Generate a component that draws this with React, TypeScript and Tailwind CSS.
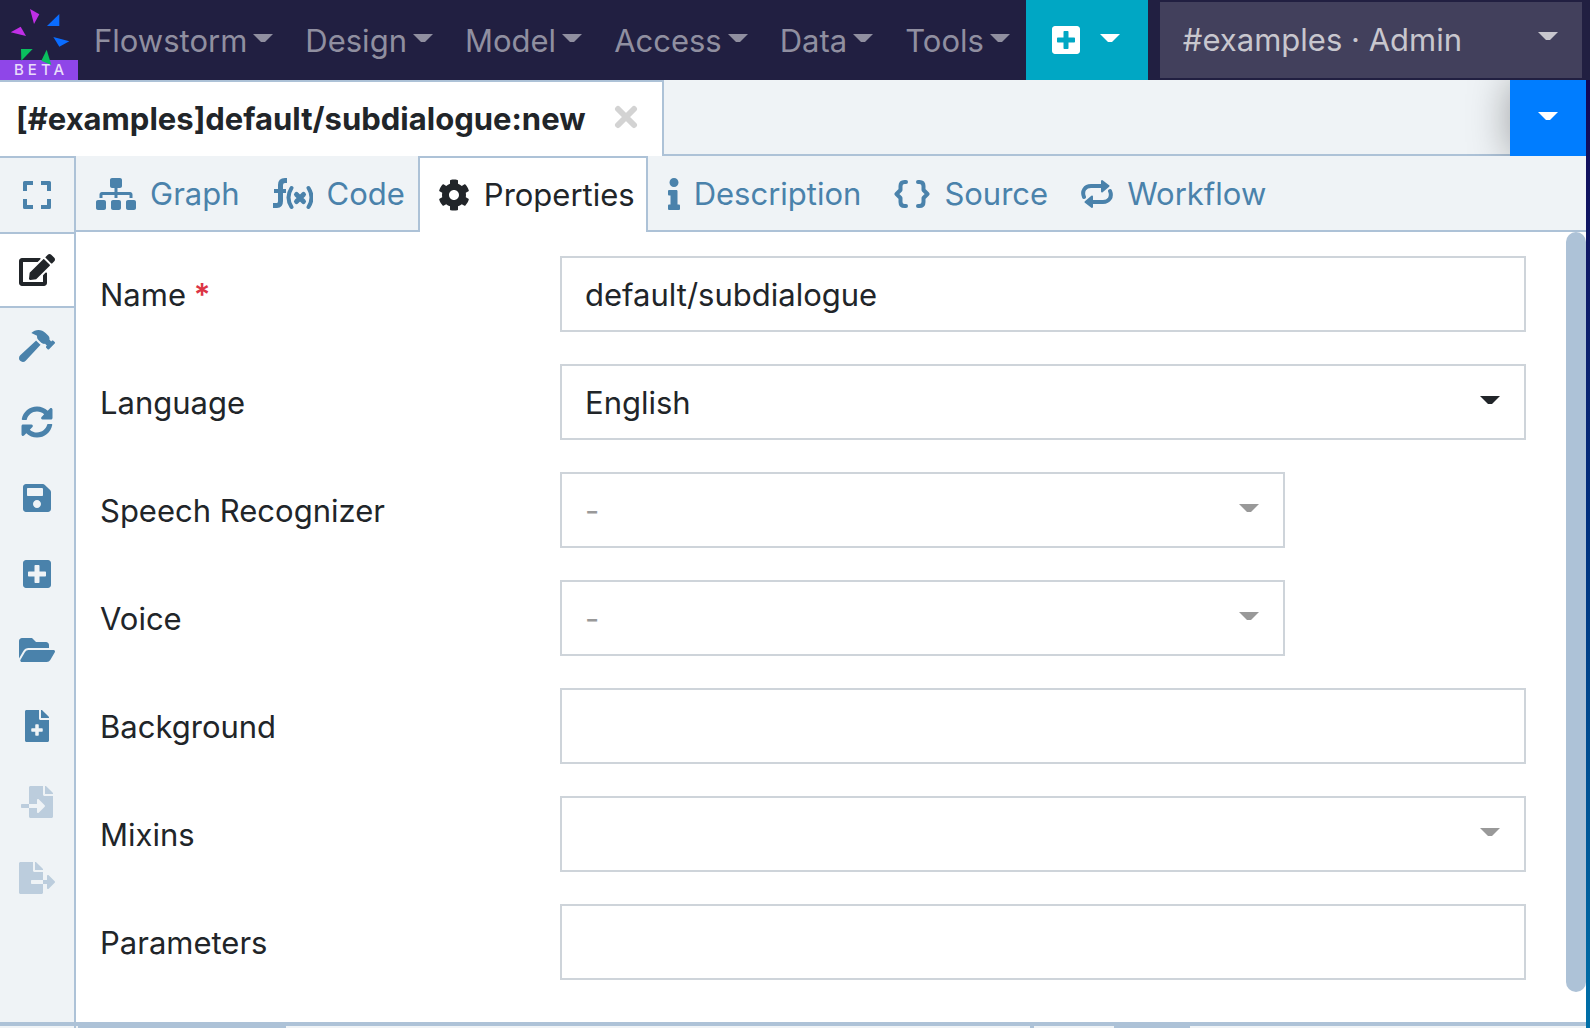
import { useState } from "react";
import type { ReactNode } from "react";
import {
  FaCog,
  FaEdit,
  FaFileExport,
  FaFileImport,
  FaFolderOpen,
  FaHammer,
  FaInfo,
  FaPlusSquare,
  FaSave,
  FaSitemap,
  FaSyncAlt,
} from "react-icons/fa";

function Caret({ className = "" }: { className?: string }) {
  return (
    <svg viewBox="0 0 20 8" fill="currentColor" aria-hidden="true" className={`h-2 w-5 shrink-0 ${className}`}>
      <path d="M0 0H20L12 8H8Z" />
    </svg>
  );
}

function LogoMark() {
  return (
    <svg viewBox="0 0 234 240" aria-hidden="true" className="absolute inset-0 h-full w-full">
      <g fill="#c02fe6">
        <path d="M90 27L118 43L102 72Z" />
        <path d="M32 97L62 80L78 108Z" />
      </g>
      <g fill="#0a6cff">
        <path d="M178 42V78H141Z" />
        <path d="M160 111L208 124L178 140Z" />
      </g>
      <g fill="#0abf5e">
        <path d="M63 147H98L64 182Z" />
        <path d="M140 149L124 182L154 195Z" />
      </g>
    </svg>
  );
}

function ExpandIcon() {
  return (
    <svg viewBox="0 0 28 28" fill="currentColor" aria-hidden="true" className="h-7 w-7">
      <path d="M0 1.500A1.500 1.500 0 0 1 1.500 0H10V4H4V10H0Z" />
      <path d="M18 0H26.500A1.500 1.500 0 0 1 28 1.500V10H24V4H18Z" />
      <path d="M0 18H4V24H10V28H1.500A1.500 1.500 0 0 1 0 26.500Z" />
      <path d="M24 18H28V26.500A1.500 1.500 0 0 1 26.500 28H18V24H24Z" />
    </svg>
  );
}

function FilePlusIcon() {
  return (
    <svg viewBox="0 0 384 512" fill="currentColor" aria-hidden="true" className="h-8 w-6">
      <path
        fillRule="evenodd"
        d="M224 136V0H24C10.700 0 0 10.700 0 24V488C0 501.300 10.700 512 24 512H360C373.300 512 384 501.300 384 488V160H248C234.800 160 224 149.200 224 136ZM164 240Q164 228 176 228H208Q220 228 220 240V292H272Q284 292 284 304V336Q284 348 272 348H220V400Q220 412 208 412H176Q164 412 164 400V348H112Q100 348 100 336V304Q100 292 112 292H164Z"
      />
      <path d="M384 121.900V128H256V0H262.100C268.500 0 274.600 2.500 279.100 7L377 105C381.500 109.500 384 115.600 384 121.900Z" />
    </svg>
  );
}

function FunctionIcon() {
  return (
    <svg viewBox="0 0 40 32" fill="none" stroke="currentColor" aria-hidden="true" className="h-8 w-10">
      <path
        strokeWidth="5"
        strokeLinejoin="round"
        d="M14 2.500H12C9 2.500 7.500 4 7.500 7V23C7.500 25.500 6.500 27.500 4 27.500H0"
      />
      <path strokeWidth="4" d="M1 13H13" />
      <path strokeWidth="4" strokeLinecap="round" d="M18.500 10Q12.500 19.500 18.500 29M35.500 10Q41.500 19.500 35.500 29" />
      <path strokeWidth="5" strokeLinecap="round" d="M23.500 16.500L30.500 23.500M30.500 16.500L23.500 23.500" />
    </svg>
  );
}

function BracesIcon() {
  return (
    <svg viewBox="0 0 36 28" fill="none" stroke="currentColor" strokeWidth="4" strokeLinecap="round" strokeLinejoin="round" aria-hidden="true" className="h-7 w-9">
      <path d="M12 2H10.500Q6.500 2 6.500 6V10L2.500 14L6.500 18V22Q6.500 26 10.500 26H12" />
      <path d="M24 2H25.500Q29.500 2 29.500 6V10L33.500 14L29.500 18V22Q29.500 26 25.500 26H24" />
    </svg>
  );
}

function RepeatIcon() {
  return (
    <svg viewBox="0 0 32 32" fill="none" stroke="currentColor" strokeLinecap="round" aria-hidden="true" className="h-8 w-8">
      <path strokeWidth="4" d="M3 19C0.500 13 4 8 10 8H21M29 13C31.500 19 28 24 22 24H11" />
      <path fill="currentColor" strokeWidth="2" strokeLinejoin="round" d="M21 3V13.500L27.500 8ZM11 29V18.500L4.500 24Z" />
    </svg>
  );
}

const menus = ["Flowstorm", "Design", "Model", "Access", "Data", "Tools"];

const views: { name: string; icon: ReactNode }[] = [
  { name: "Graph", icon: <FaSitemap className="h-8 w-10" /> },
  { name: "Code", icon: <FunctionIcon /> },
  { name: "Properties", icon: <FaCog className="h-8 w-8" /> },
  { name: "Description", icon: <FaInfo className="h-8 w-3" /> },
  { name: "Source", icon: <BracesIcon /> },
  { name: "Workflow", icon: <RepeatIcon /> },
];

const tools: { name: string; icon: ReactNode; disabled?: boolean }[] = [
  { name: "Full screen", icon: <ExpandIcon /> },
  { name: "Edit", icon: <FaEdit className="h-8 w-9" /> },
  { name: "Build", icon: <FaHammer className="h-8 w-9" /> },
  { name: "Reload", icon: <FaSyncAlt className="h-8 w-8" /> },
  { name: "Save", icon: <FaSave className="h-8 w-7" /> },
  { name: "Add", icon: <FaPlusSquare className="h-8 w-7" /> },
  { name: "Open", icon: <FaFolderOpen className="h-8 w-9" /> },
  { name: "New file", icon: <FilePlusIcon /> },
  { name: "Import", icon: <FaFileImport className="h-8 w-8" />, disabled: true },
  { name: "Export", icon: <FaFileExport className="h-8 w-9" />, disabled: true },
];

type Field = {
  id: string;
  label: string;
  value?: string;
  kind: "text" | "select";
  required?: boolean;
  disabled?: boolean;
  narrow?: boolean;
};

const fields: Field[] = [
  { id: "name", label: "Name", kind: "text", value: "default/subdialogue", required: true },
  { id: "language", label: "Language", kind: "select", value: "English" },
  { id: "recognizer", label: "Speech Recognizer", kind: "select", value: "-", disabled: true, narrow: true },
  { id: "voice", label: "Voice", kind: "select", value: "-", disabled: true, narrow: true },
  { id: "background", label: "Background", kind: "text" },
  { id: "mixins", label: "Mixins", kind: "select", value: "", disabled: true },
  { id: "parameters", label: "Parameters", kind: "text" },
];

function FieldRow({ field }: { field: Field }) {
  return (
    <div className="flex items-center">
      <label htmlFor={field.id} className="w-[460px] shrink-0 pt-0.5">
        {field.label}
        {field.required && <span className="font-semibold text-[#dc3545]"> *</span>}
      </label>
      <div className="min-w-0 flex-1">
        {field.kind === "text" ? (
          <input
            id={field.id}
            type="text"
            defaultValue={field.value}
            required={field.required}
            className="block h-[76px] w-full border-2 border-[#ced4da] bg-white px-[23px] outline-none"
          />
        ) : (
          <div className={`relative ${field.narrow ? "w-3/4" : "w-full"}`}>
            <select
              id={field.id}
              defaultValue={field.value}
              disabled={field.disabled}
              className="block h-[76px] w-full appearance-none border-2 border-[#ced4da] bg-white px-[23px] pt-0.5 text-[#212529] opacity-100 outline-none disabled:text-[#999999]"
            >
              <option>{field.value}</option>
            </select>
            <Caret
              className={`pointer-events-none absolute top-8 right-[26px] ${field.disabled ? "text-[#999999]" : "text-[#212529]"}`}
            />
          </div>
        )}
      </div>
    </div>
  );
}

export default function App() {
  const [view, setView] = useState("Properties");
  const [tool, setTool] = useState("Edit");

  return (
    <div className="flex min-h-screen flex-col bg-linear-to-b from-[#12004f] via-[#002f7e] to-[#0070a8] font-['Inter',sans-serif] text-[31px] leading-[48px] text-[#212529]">
      <header className="flex h-20 bg-[#211f41]">
        <a href="#home" aria-label="Flowstorm home" className="relative flex w-[78px] shrink-0 items-end">
          <span className="h-5 w-full bg-[#8f46e8] pl-1 text-center text-[15px] leading-5 font-medium tracking-[4px] text-[#e9dcfb]">
            BETA
          </span>
          <LogoMark />
        </a>
        <nav className="flex">
          {menus.map((name) => (
            <button key={name} type="button" className="flex items-center gap-1.5 px-4 pt-0.5 text-[#908fa0]">
              {name}
              <Caret className="mb-1.5" />
            </button>
          ))}
        </nav>
        <button type="button" aria-label="Create" className="flex w-[122px] shrink-0 items-center gap-5 bg-[#00a7c4] pl-[26px] text-white">
          <FaPlusSquare className="h-8 w-7" />
          <Caret className="mb-1" />
        </button>
        <div className="relative my-0.5 mr-2 ml-3 min-w-0 flex-1">
          <select
            aria-label="Workspace"
            className="h-full w-full appearance-none bg-[#42405c] px-[23px] text-[#c8c7ce] outline-none"
          >
            <option>#examples · Admin</option>
          </select>
          <Caret className="pointer-events-none absolute top-[30px] right-6 text-[#c8c7ce]" />
        </div>
      </header>

      <div className="mr-1 flex flex-1 flex-col bg-white">
        <div className="flex h-[76px] overflow-hidden bg-[#eff3f6]">
          <div className="flex items-center gap-7 border-t-2 border-r-2 border-[#adc2d7] bg-white pr-6 pl-4">
            <span className="font-bold whitespace-nowrap">[#examples]default/subdialogue:new</span>
            <button type="button" aria-label="Close tab" className="mb-1 text-[#d3d3d3]">
              <svg viewBox="0 0 24 24" stroke="currentColor" strokeWidth="6" strokeLinecap="round" aria-hidden="true" className="h-6 w-6">
                <path d="M4 4L20 20M20 4L4 20" />
              </svg>
            </button>
          </div>
          <div className="flex-1 border-b-2 border-[#adc2d7]" />
          <button
            type="button"
            aria-label="Open tabs"
            className="flex w-[76px] items-center justify-center bg-[#007dff] pb-1 text-white shadow-[0_0_40px_rgba(0,0,0,0.35)]"
          >
            <Caret />
          </button>
        </div>

        <div className="flex flex-1">
          <aside className="flex w-[76px] shrink-0 flex-col border-t-2 border-r-2 border-[#adc2d7] bg-[#eff3f6]">
            {tools.map(({ name, icon, disabled }, index) => (
              <button
                key={name}
                type="button"
                aria-label={name}
                disabled={disabled}
                onClick={() => setTool(name)}
                className={`flex items-center justify-center ${index === 0 ? "h-[74px]" : "h-[76px]"} ${
                  tool === name
                    ? "border-y-2 border-[#adc2d7] bg-white"
                    : "text-[#4a82ab] disabled:text-[#bccddd]"
                }`}
              >
                {icon}
              </button>
            ))}
          </aside>

          <main className="flex min-w-0 flex-1 flex-col">
            <div role="tablist" className="flex h-[76px] bg-[#eff3f6]">
              {views.map(({ name, icon }) => (
                <button
                  key={name}
                  type="button"
                  role="tab"
                  aria-selected={view === name}
                  onClick={() => setView(name)}
                  className={`flex items-center gap-3.5 border-[#adc2d7] ${
                    view === name
                      ? "border-x-2 border-t-2 bg-white pr-[11px] pl-[18px]"
                      : "border-b-2 pt-0.5 pr-[13px] pl-5 text-[#4a82ab]"
                  }`}
                >
                  {icon}
                  {name}
                </button>
              ))}
              <div className="flex-1 border-b-2 border-[#adc2d7]" />
            </div>
            <div className="flex flex-1">
              <form className="flex min-w-0 flex-1 flex-col gap-8 py-6 pr-10 pl-6">
                {fields.map((field) => (
                  <FieldRow key={field.id} field={field} />
                ))}
              </form>
              <div className="mb-[30px] w-5 rounded-full bg-[#adc2d7]" />
            </div>
          </main>
        </div>

        <footer className="flex h-1.5 border-t-4 border-[#adc2d7] bg-[#eff3f6]">
          <div className="w-[76px] border-r-2 border-[#adc2d7]" />
          <div className="ml-0.5 w-[208px] bg-[#adc2d7]" />
          <div className="w-[748px] border-r-4 border-[#adc2d7]" />
          <div className="w-20" />
          <div className="w-[76px] bg-[#adc2d7]" />
        </footer>
      </div>
    </div>
  );
}
